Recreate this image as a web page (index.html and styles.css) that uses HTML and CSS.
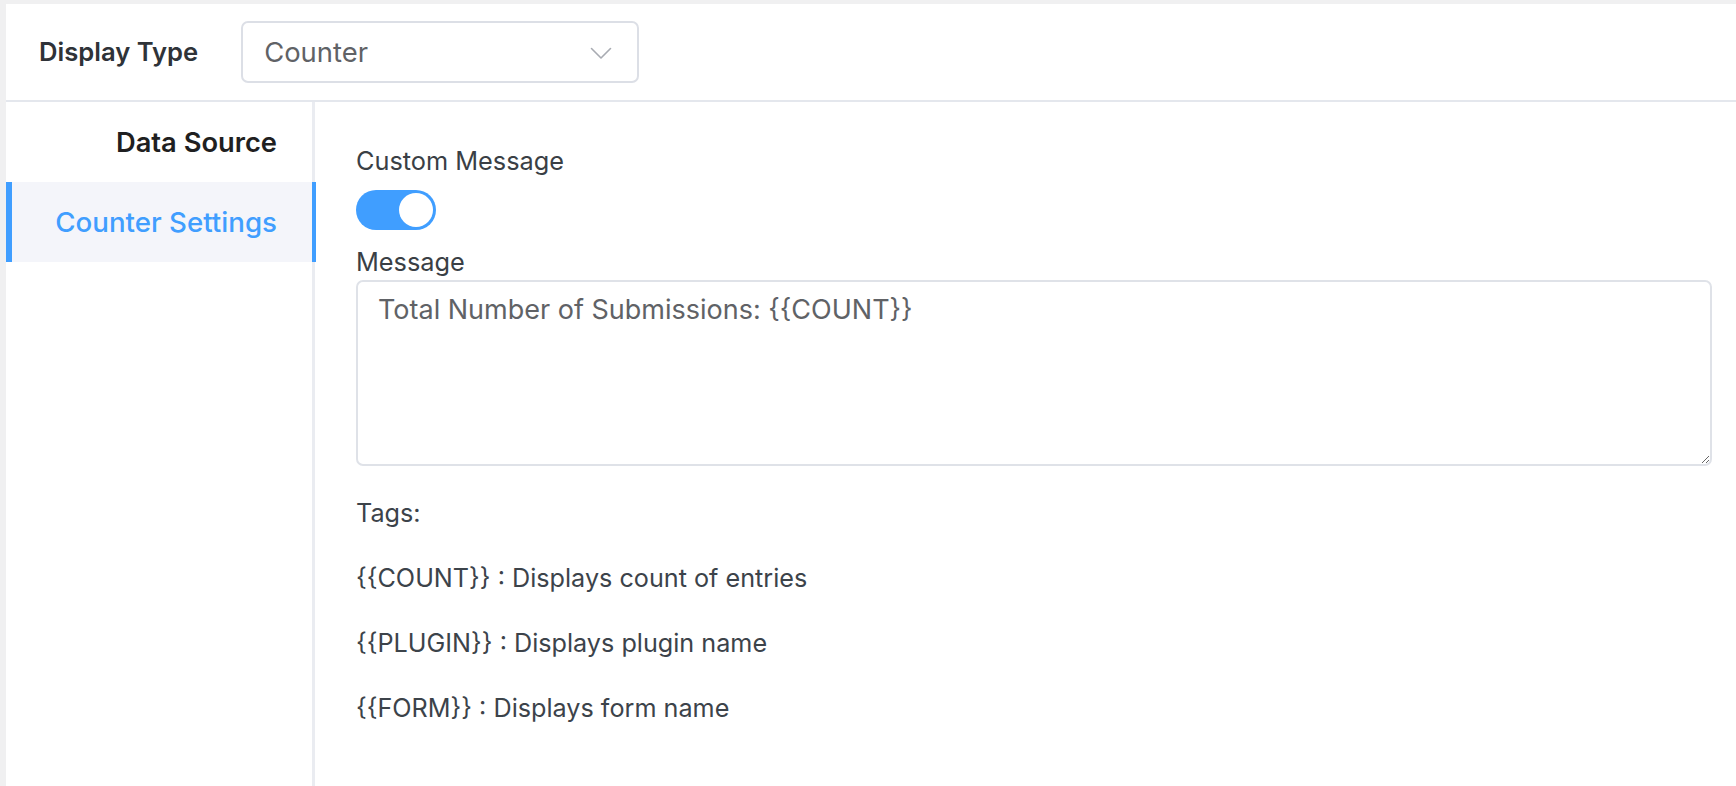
FILE: index.html
```html
<!DOCTYPE html>
<html lang="en">
<head>
<meta charset="utf-8">
<title>Counter Settings</title>
<link rel="stylesheet" href="styles.css">
</head>
<body>
<div class="page">
  <div class="card">
    <div class="header">
      <span class="header-label">Display Type</span>
      <div class="select">
        <span class="select-value">Counter</span>
        <svg class="chevron" width="22" height="13" viewBox="0 0 22 13" aria-hidden="true">
          <path d="M1.5 1.5 L11 11 L20.5 1.5" fill="none" stroke="#a8abb2" stroke-width="1.6" stroke-linecap="round" stroke-linejoin="round"/>
        </svg>
      </div>
    </div>
    <div class="body">
      <nav class="sidebar">
        <div class="nav-item">Data Source</div>
        <div class="nav-item active">Counter Settings</div>
      </nav>
      <main class="content">
        <div class="label">Custom Message</div>
        <div class="switch"><span class="knob"></span></div>
        <div class="label label-message">Message</div>
        <textarea class="textarea">Total Number of Submissions: {{COUNT}}</textarea>
        <div class="tags">
          <p class="tag-line">Tags:</p>
          <p class="tag-line">{{COUNT}} : Displays count of entries</p>
          <p class="tag-line">{{PLUGIN}} : Displays plugin name</p>
          <p class="tag-line">{{FORM}} : Displays form name</p>
        </div>
      </main>
    </div>
  </div>
</div>
</body>
</html>
```
FILE: styles.css
```css
* { box-sizing: border-box; }
html, body { margin: 0; padding: 0; }
body {
  background: #f0f0f1;
  font-family: Inter, "Noto Sans", "Liberation Sans", sans-serif;
  color: #3c434a;
}
.page {
  padding: 4px 0 0 6px;
  min-height: 100vh;
  display: flex;
}
.card {
  flex: 1;
  background: #ffffff;
  display: flex;
  flex-direction: column;
}
.header {
  height: 98px;
  border-bottom: 2px solid #e4e7ed;
  display: flex;
  align-items: center;
  gap: 43px;
  padding-left: 33px;
}
.header-label {
  font-size: 25.6px;
  font-weight: 600;
  color: #2f3338;
  line-height: 36px;
}
.select {
  width: 398px;
  height: 62px;
  border: 2px solid #dcdfe6;
  border-radius: 7px;
  display: flex;
  align-items: center;
  justify-content: space-between;
  padding: 0 25px 0 21px;
}
.select-value {
  font-size: 27.4px;
  color: #606266;
  line-height: 36px;
}
.chevron { display: block; margin-top: 2px; }
.body {
  flex: 1;
  display: flex;
}
.sidebar {
  width: 309px;
  flex: none;
  border-right: 3px solid #eaecf1;
  display: flex;
  flex-direction: column;
}
.nav-item {
  height: 80px;
  display: flex;
  align-items: center;
  justify-content: flex-end;
  padding-right: 35px;
  font-size: 27.3px;
  font-weight: 600;
  color: #1f1f21;
}
.nav-item.active {
  background: #f4f5fa;
  color: #409eff;
  font-weight: 500;
  font-size: 27.7px;
  border-left: 6px solid #409eff;
  border-right: 4px solid #409eff;
  margin-right: -4px;
  padding-right: 35px;
}
.content {
  flex: 1;
  padding: 41px 24px 0 41px;
  display: flex;
  flex-direction: column;
  align-items: flex-start;
}
.label {
  font-size: 25.3px;
  line-height: 36px;
  color: #3a3f45;
}
.switch {
  margin-top: 11px;
  width: 80px;
  height: 40px;
  border-radius: 20px;
  background: #409eff;
  display: flex;
  align-items: center;
  justify-content: flex-end;
  padding-right: 3px;
}
.knob {
  width: 34px;
  height: 34px;
  border-radius: 50%;
  background: #ffffff;
}
.label-message { margin-top: 14px; }
.textarea {
  width: 100%;
  height: 186px;
  border: 2px solid #dfe2e8;
  border-radius: 7px;
  padding: 7px 20px;
  font-family: Inter, "Noto Sans", "Liberation Sans", sans-serif;
  font-size: 27px;
  line-height: 41px;
  color: #606266;
  resize: vertical;
  outline: none;
  display: block;
  margin: 0;
}
.tags { padding-top: 0; }
.tag-line {
  margin: 29px 0 0;
  font-size: 25.2px;
  line-height: 36px;
  color: #3c434a;
}
```
